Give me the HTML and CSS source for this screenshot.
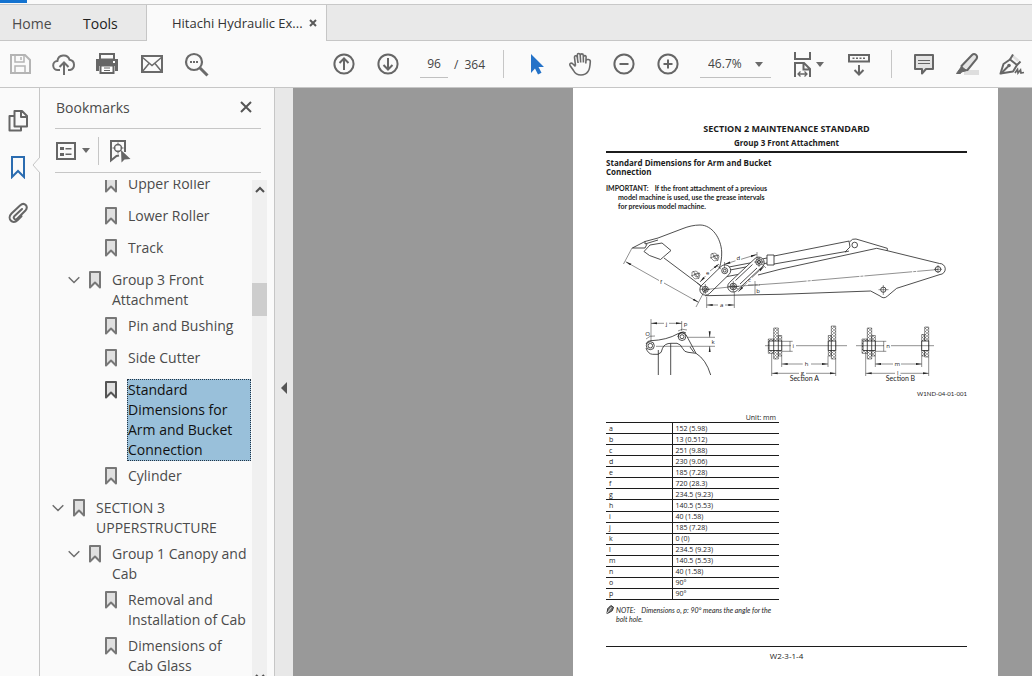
FILE: index.html
```html
<!DOCTYPE html>
<html lang="en">
<head>
<meta charset="utf-8">
<title>Hitachi Hydraulic Excavator</title>
<link rel="stylesheet" href="styles.css">
</head>
<body>
<svg class="defs" aria-hidden="true">
  <symbol id="mark" viewBox="0 0 12 18"><path d="M1 1h10v15.500L6 11.500 1 16.500z" fill="#e0e0e0" stroke="currentColor" stroke-width="2" stroke-linejoin="round"/></symbol>
  <symbol id="chev" viewBox="0 0 12 8"><path d="M.7 1.200 6 6.500l5.300-5.300" fill="none" stroke="#6e6e6e" stroke-width="1.500"/></symbol>
  <symbol id="caret" viewBox="0 0 8 5"><path d="M0 0h8L4 5z" fill="#6a6a6a"/></symbol>
</svg>
<div class="app">
  <div class="titlebar"><span class="titlebar-accent"></span></div>
  <nav class="tabs">
    <button class="tab home">Home</button>
    <button class="tab tools">Tools</button>
    <div class="tab active"><span>Hitachi Hydraulic Ex...</span>
      <button class="tab-close" aria-label="Close tab"><svg width="8" height="8" viewBox="0 0 8 8"><path d="M1 1l6 6M7 1 1 7" stroke="#5a5a5a" stroke-width="2"/></svg></button></div>
  </nav>
  <header class="toolbar">
    <div class="group">
      <button class="tool" aria-label="Save"><svg viewBox="0 0 28 28"><path d="M5 5h14l5 5v13H5z" fill="none" stroke="#b4b4b4" stroke-width="2"/><path d="M9 5v7h9V5M15 7v3M9 23v-7h10v7" fill="none" stroke="#b4b4b4" stroke-width="1.500"/></svg></button>
      <button class="tool" aria-label="Upload"><svg viewBox="0 0 28 28"><path d="M10 20H8a4.500 4.500 0 0 1-.6-9 6.300 6.300 0 0 1 12.200-1.200A5.200 5.200 0 0 1 20 20h-2M14 25V13M9.500 17l4.500-4.500 4.500 4.500" fill="none" stroke="#6e6e6e" stroke-width="2"/></svg></button>
      <button class="tool" aria-label="Print"><svg viewBox="0 0 28 28"><path d="M2 9h22v12h-3v-5H5v5H2zM5 3h16v6H5z" fill="#666"/><path d="M7 5h12v3.500H7z" fill="#fafafa"/><path d="M6.500 15.500h13V23h-13z" fill="#fff" stroke="#666" stroke-width="2"/><path d="M10 18h6M10 20.500h6" stroke="#666"/><path d="M19 11h2v2h-2z" fill="#fff"/></svg></button>
      <button class="tool" aria-label="Email"><svg viewBox="0 0 28 28"><path d="M4 6h20v16H4z" fill="none" stroke="#6a6a6a" stroke-width="2"/><path d="m4 7 10 8.500L24 7M4 22l7-8.500M24 22l-7-8.500" fill="none" stroke="#6a6a6a" stroke-width="1.500"/></svg></button>
      <button class="tool" aria-label="Find"><svg viewBox="0 0 28 28"><circle cx="12" cy="12" r="8" fill="none" stroke="#6a6a6a" stroke-width="2.200"/><path d="m18 18 7.500 7.500" stroke="#6a6a6a" stroke-width="3"/><path d="M8 11h2v2H8zM11 11h2v2h-2zM14 11h2v2h-2z" fill="#6a6a6a"/></svg></button>
    </div>
    <div class="spacer"></div>
    <div class="group">
      <button class="tool" aria-label="Previous page"><svg viewBox="0 0 28 28" fill="none" stroke="#666" stroke-width="2"><circle cx="14" cy="14" r="9.600"/><path d="M14 20V9M9.500 13 14 8.500l4.500 4.500"/></svg></button>
      <button class="tool" aria-label="Next page"><svg viewBox="0 0 28 28" fill="none" stroke="#666" stroke-width="2"><circle cx="14" cy="14" r="9.600"/><path d="M14 8v11M9.500 15l4.500 4.500 4.500-4.500"/></svg></button>
    </div>
    <div class="pager"><input type="text" value="96" aria-label="Page number"><span>/</span><span>364</span></div>
    <div class="divider"></div>
    <div class="group pointer">
      <button class="tool" aria-label="Select"><svg viewBox="0 0 28 28"><path d="M9 4v19l4-4.500 3 6 3.500-1.700-3-5.800H22z" fill="#2472c8"/></svg></button>
      <button class="tool" aria-label="Pan"><svg viewBox="0 0 28 28" fill="none" stroke="#6a6a6a" stroke-width="1.600" stroke-linejoin="round"><path d="M9.500 15.500 8.500 7.500c-.3-2 2.300-2.500 2.700-.5l.9 6M11.500 8.500 11.300 5c0-2 2.700-2 2.900 0l.5 7.500M14.300 5.500c0-2.200 3-2.200 3 0l.1 7M17.400 7c.2-2 2.900-1.800 2.700.2l-.3 6.300M20 10.500c.6-1.700 4.600-1.300 4.300 1.200-.3 5.500-.8 8-2.300 9.800-2 2.800-4.500 3.500-7 3.500-4.500 0-6.300-2-7.500-4.500L4 15.500c-.9-2 1-3 2.400-2l3.100 3"/></svg></button>
      <button class="tool" aria-label="Zoom out"><svg viewBox="0 0 28 28" fill="none" stroke="#666" stroke-width="2"><circle cx="14" cy="14" r="9.600"/><path d="M9.500 14h9"/></svg></button>
      <button class="tool" aria-label="Zoom in"><svg viewBox="0 0 28 28" fill="none" stroke="#666" stroke-width="2"><circle cx="14" cy="14" r="9.600"/><path d="M9.500 14h9M14 9.500v9"/></svg></button>
    </div>
    <div class="zoom"><select aria-label="Zoom level"><option>46.7%</option></select><svg class="zoom-caret" width="8" height="5"><use href="#caret"/></svg></div>
    <div class="group">
      <button class="tool fit" aria-label="Fit width"><svg viewBox="0 0 28 28" fill="none" stroke="#666" stroke-width="2"><path d="M6 2v7h15V2M6 27V13h9l6 6v8M14.500 13v6.500H21"/><path d="M9 24h9m-6.500-2.500L9 24l2.500 2.500m4-5L18 24l-2.500 2.500" stroke-width="1.300"/></svg><svg class="fit-caret" viewBox="0 0 8 5"><use href="#caret"/></svg></button>
      <button class="tool keys" aria-label="Toolbar options"><svg viewBox="0 0 28 28" fill="none" stroke="#666" stroke-width="2"><path d="M4 5h20v6.500H4zM14 15v9M9.500 20l4.500 4.500 4.500-4.500"/><path d="M7.500 8.300H21" stroke-dasharray="2 1.500" stroke-width="1.600"/></svg></button>
    </div>
    <div class="divider last"></div>
    <div class="group">
      <button class="tool" aria-label="Comment"><svg viewBox="0 0 28 28"><path d="M5 5h18v14h-7l-4 4.500V19H5z" fill="#e4e4e4" stroke="#666" stroke-width="2" stroke-linejoin="round"/><path d="M8 10.500h12M8 13.500h12" stroke="#666" stroke-width="1.200"/></svg></button>
      <button class="tool" aria-label="Highlight"><svg viewBox="0 0 28 28"><path d="M10 20h15v5H10z" fill="#dedede"/><path d="M7.500 16 18 5c2.500-2.500 6.500.5 4.500 4L13.500 20l-5 .5z" fill="#e4e4e4" stroke="#666" stroke-width="2"/><path d="m7.500 16.500 5 4L7.500 22l-1 1.500h-4z" fill="#666" stroke="#666"/></svg></button>
      <button class="tool" aria-label="Sign"><svg viewBox="0 0 28 28"><path d="m14.500 4 7 6-2 2-6-5.500z" fill="#e0e0e0"/><path d="M2.500 23.500 5.500 14 12 9.500l7 5.500-4 6.500z" fill="#fafafa" stroke="#666" stroke-width="2" stroke-linejoin="round"/><path d="m12 9.500 3-5M19 15l3.500-3.500M3 23.500l7-7" stroke="#666" stroke-width="2"/><circle cx="11" cy="15.500" r="1.800" fill="#666"/><path d="m17 23 2.500-3.500.5 3.500 2.500-3 .5 3 3-.5" fill="none" stroke="#666" stroke-width="1.700"/></svg></button>
    </div>
  </header>
  <main class="work">
    <nav class="rail">
      <button class="rail-btn" aria-label="Page thumbnails"><svg width="20" height="24" viewBox="0 0 20 24" fill="none" stroke="#666" stroke-width="2"><path d="M6.500 2h7.500l5 5v10.500H6.500zM13 2v6h6M6.500 7H1.500v14.500h11.500V18" stroke-linejoin="round"/></svg></button>
      <button class="rail-btn current" aria-label="Bookmarks"><svg width="16" height="24" viewBox="0 0 16 24"><path d="M2 2h12v20l-6-6-6 6z" fill="none" stroke="#2b6cb0" stroke-width="2"/></svg><svg class="notch" width="8" height="16" viewBox="0 0 8 16"><path d="M8 0 1 8l7 8" fill="#fafafa" stroke="#c6c6c6"/></svg></button>
      <button class="rail-btn" aria-label="Attachments"><svg width="20" height="24" viewBox="0 0 20 24" fill="none" stroke="#666" stroke-width="2"><path d="m14 8-7.500 7c-2 2 .7 4.800 2.700 2.800l8-8C21 5.500 16.500.5 12 4.500l-8.500 8c-5 5 1 11.500 6 6.800l4-4" stroke-linecap="round"/></svg></button>
    </nav>
    <aside class="panel">
      <div class="panel-head"><h2>Bookmarks</h2><button aria-label="Close panel"><svg width="12" height="12" viewBox="0 0 12 12"><path d="m1 1 10 10M11 1 1 11" stroke="#555" stroke-width="2"/></svg></button></div>
      <div class="panel-tools">
        <button class="options" aria-label="Options"><svg width="20" height="18" viewBox="0 0 20 18"><path d="M1 1h18v16H1z" fill="none" stroke="#666" stroke-width="2"/><path d="M4 5h4v3H4zM4 11h4v3H4zM9.500 6h6v1.500h-6zM9.500 11.500h6V13h-6z" fill="#666"/></svg><svg width="8" height="5"><use href="#caret"/></svg></button>
        <span class="panel-split"></span>
        <button aria-label="Find current bookmark"><svg width="22" height="24" viewBox="0 0 22 24"><path d="M10 16.500 7.500 17 2 21.500V2h14v11" fill="none" stroke="#666" stroke-width="2"/><circle cx="9" cy="9" r="3.500" fill="none" stroke="#666" stroke-width="1.400"/><path d="M9 3.500v3M9 11.500v3M3.500 9h3M11.500 9h3" stroke="#666"/><path d="m12 11 .5 12.500 3-3 6-.5z" fill="#666"/></svg></button>
      </div>
      <div class="tree-wrap">
        <ul class="tree">
          <li class="row l3"><svg class="mark"><use href="#mark"/></svg><a href="#">Upper Roller</a></li>
          <li class="row l3"><svg class="mark"><use href="#mark"/></svg><a href="#">Lower Roller</a></li>
          <li class="row l3"><svg class="mark"><use href="#mark"/></svg><a href="#">Track</a></li>
          <li class="row l2"><button aria-label="Collapse"><svg class="chev"><use href="#chev"/></svg></button><svg class="mark"><use href="#mark"/></svg><a href="#">Group 3 Front Attachment</a></li>
          <li class="row l3"><svg class="mark"><use href="#mark"/></svg><a href="#">Pin and Bushing</a></li>
          <li class="row l3"><svg class="mark"><use href="#mark"/></svg><a href="#">Side Cutter</a></li>
          <li class="row l3 selected"><svg class="mark"><use href="#mark"/></svg><a href="#">Standard Dimensions for Arm and Bucket Connection</a></li>
          <li class="row l3"><svg class="mark"><use href="#mark"/></svg><a href="#">Cylinder</a></li>
          <li class="row l1"><button aria-label="Collapse"><svg class="chev"><use href="#chev"/></svg></button><svg class="mark"><use href="#mark"/></svg><a href="#">SECTION 3 UPPERSTRUCTURE</a></li>
          <li class="row l2"><button aria-label="Collapse"><svg class="chev"><use href="#chev"/></svg></button><svg class="mark"><use href="#mark"/></svg><a href="#">Group 1 Canopy and Cab</a></li>
          <li class="row l3"><svg class="mark"><use href="#mark"/></svg><a href="#">Removal and Installation of Cab</a></li>
          <li class="row l3"><svg class="mark"><use href="#mark"/></svg><a href="#">Dimensions of Cab Glass</a></li>
        </ul>
        <div class="scrollbar"><svg width="10" height="7" viewBox="0 0 10 7"><path d="m1 6 4-4 4 4" fill="none" stroke="#505050" stroke-width="2"/></svg><span class="thumb"></span><svg class="down" width="10" height="7" viewBox="0 0 10 7"><path d="m1 1 4 4 4-4" fill="none" stroke="#505050" stroke-width="2"/></svg></div>
      </div>
    </aside>
    <button class="splitter" aria-label="Hide panel"><svg width="6" height="12" viewBox="0 0 6 12"><path d="M6 0v12L0 6z" fill="#555"/></svg></button>
    <section class="viewer">
      <article class="page">
        <h1>SECTION 2 MAINTENANCE STANDARD</h1>
        <p class="subtitle">Group 3 Front Attachment</p>
        <h3>Standard Dimensions for Arm and Bucket Connection</h3>
        <p class="important"><span>IMPORTANT:</span>If the front attachment of a previous model machine is used, use the grease intervals for previous model machine.</p>
        <svg class="figure" viewBox="606 215 361 172" role="img" aria-label="Arm and bucket dimension drawing">
          <defs>
            <pattern id="hatch" width="3" height="3" patternUnits="userSpaceOnUse"><path d="M0 3 3 0M0 0l3 3" stroke="#333" stroke-width=".4"/></pattern>
            <marker id="arr" viewBox="0 0 6 4" markerWidth="6" markerHeight="4" refX="6" refY="2" orient="auto" markerUnits="userSpaceOnUse"><path d="M0 1 6 2 0 3z" fill="#222"/></marker>
          </defs>
          <g class="ln">
            <path d="M716 282C718 270 722 264 721.700 252 721 238 712 225 700 225c-6 0-12 1.500-17 3.500L658 238l-13 3.500L632.300 248H645l2-4M645 241.500v2.500l13-4"/>
            <path d="m644 251.500 6-6.500 12-2 9 7.500-10.500 9-11-4zM664 258l36 27 1 3"/>
            <path d="M716 282l-10 1.500M705 295.700 780 294.300 870.700 291 880 296q4 3.500 7.500 0l9.200-7.700L940 274.500a5.500 5.500 0 0 0-.5-11L887.300 250.700 876.700 248.300 780 269.300 758 275M722 277.500l21-4"/>
            <path d="m774 256 75.300-15M774 264l71-12.300M849 241l1 6-5 5 4-1M850 241.500a6 6 0 0 1 6-2.500l31.300 9.300v2.400"/>
            <path d="M767 255h7v10h-7zM762 259l5-1M763 264l4-1M729 267l26-5M730 270l21-4"/>
            <path class="white" d="m701.500 285.500 19.500-19a5.500 5.500 0 0 1 8 8l-19.500 19a5.500 5.500 0 1 1-8-8z"/>
            <path class="white" d="m729.500 282.500 25.500-24a5.500 5.500 0 0 1 8 7.500l-25.500 24a5.500 5.500 0 1 1-8-7.500zM735.500 280.500l17-16M740 284l17-16"/>
            <path class="thin" d="m706 289.500 28-3 56-4L938 269.500" stroke-dasharray="48 1 3 1"/>
            <circle cx="705.300" cy="289.300" r="3"/><circle cx="705.300" cy="289.300" r="1.500"/>
            <circle cx="724.700" cy="270.700" r="3"/><circle cx="724.700" cy="270.700" r="1.400"/>
            <circle cx="733.300" cy="286.500" r="3.300"/><circle cx="733.300" cy="286.500" r="1.700"/>
            <circle cx="759" cy="262" r="3.300"/><circle cx="759" cy="262" r="1.700"/>
            <circle cx="854.700" cy="245" r="2.800"/><circle cx="938" cy="269.300" r="2.800"/><circle cx="883.300" cy="289.700" r="2.600"/>
            <path class="thin" d="M878.500 289.700h10M883.300 285v10M934 269.300h8M938 265v8M700 289.300h10M705.300 284v10M728 286.500h11M733.300 281v11M754 262h10M759 257v10"/>
            <path class="thin" d="m692 272 4-1 4 3-1 4-4 1-3-3zM693 271l6 8M691 276l9-3M694 274l4-1 1 3-3 1zM711 254l4-1 4 3-1 4-4 1-3-3zM712 253l6 8M710 258l9-3M713 256l4-1 1 3-3 1z"/>
            <path class="thin" d="m632 248-8.500 16M705 290l-9 17M706.700 297v11M734.300 292v16M755 281v13M724.500 262v6M757 252v8M697 283l6 4M716 265l5 4M738 289l-3-2M762 264l4 4M748 285h12"/>
            <path class="dim" d="M659 280.500l-33.300-18.800"/><path class="dim" d="m664 283 34.500 19.300"/>
            <path class="dim" d="M718 305h-11.300"/><path class="dim" d="M725 305h9.300"/>
            <path class="dim" d="m735.500 260.800-11 3.500"/><path class="dim" d="m741 259.300 15.700-4.800"/>
            <path class="dim" d="m705.500 276-5.500 6"/><path class="dim" d="m710 271 9-7"/>
            <path class="dim" d="m747 282.500-8.700 9.200"/><path class="dim" d="m752 277.500 12-11"/>
            <path class="thin" d="M651 319v22M681.700 321v10M688 337.300h27M656 346.300h59M646 339q4-4 9-3M678 331q4-3 9-1"/>
            <path class="dim" d="M664 323.300h-13"/><path class="dim" d="M669 323.300h12.700"/><path class="dim" d="M709.700 333v4.300"/><path class="dim" d="M709.700 350v-3.700"/>
            <circle cx="650.300" cy="345.700" r="4"/><circle cx="650.300" cy="345.700" r="2.300"/><circle cx="682" cy="336.700" r="3.800"/><circle cx="682" cy="336.700" r="2"/>
            <path d="M646 344a5 5 0 0 1 5-3.300q16-.7 27-7 5-3 8 1l10 18.600q10 6 14.700 21.700M646 348q2 6 6.500 6.300h5.500q4-1 4.500-6 2-5 8.500-5h6q4 1 5.500 5 2 4 5.500 4l8 1M658.300 350v25M670.700 343.500V375M678 337a5 5 0 0 1 8-4M690 347l4 5.500"/>
            <path class="hatched" d="M773.700 328h4.600v31h-4.600zM768.300 339h5.400v14.300h-5.400zM778.300 335.500h3.400V356h-3.400zM828.300 335.500h3V356h-3zM831.300 326h4.400v33h-4.400zM867.300 328h4.400v31h-4.400zM862 339h5.300v14.300H862zM871.700 335.500h3.600V356h-3.600zM921.700 334.500h3V356h-3zM924.700 327h4v30h-4z"/>
            <path class="white" d="M769 341h12.700v9.500H769zM828.300 341h7.400v9.500h-7.400zM863 341h12.300v9.500H863zM921.700 341h7v9.500h-7zM773.700 341v9.500M778.300 341v9.500M867.300 341v9.500M871.700 341v9.500M831.300 341v9.500"/>
            <path class="thin" d="M765 345.700h26M796 345.700h51M856 345.700h28M891 345.700h43M781.700 341.300h11M781.700 351.300h11M875.300 341.300h11M875.300 351.300h11M781.700 356v11M771.700 353v23M828 356v11M835.700 359v17M875.300 356v11M865.700 353v23M921.700 356v11M928.700 357v19M790 341.300v10M883.700 341.300v10"/>
            <path class="dim" d="M802.700 364h-21"/><path class="dim" d="M811 364h17"/><path class="dim" d="M799 373.300h-27.300"/><path class="dim" d="M806 373.300h29.700"/>
            <path class="dim" d="M893 364h-17.700"/><path class="dim" d="M901 364h20.700"/><path class="dim" d="M895 373.300h-29.300"/><path class="dim" d="M900.500 373.300h28.200"/>
          </g>
          <g class="lb">
            <text x="661" y="284">f</text><text x="721.700" y="307">a</text><text x="738.300" y="260">d</text><text x="707.700" y="275">e</text><text x="749.500" y="282">c</text><text x="758" y="293">b</text>
            <text x="666.500" y="326">j</text><text x="685.500" y="326">p</text><text x="647.700" y="336">O</text><text x="713" y="344">k</text>
            <text x="793.300" y="348">i</text><text x="888" y="348">n</text><text x="806.700" y="366">h</text><text x="802.300" y="375">g</text><text x="897.300" y="366">m</text><text x="897.700" y="375">l</text>
            <text class="cap" x="804.300" y="381">Section A</text><text class="cap" x="900.500" y="381">Section B</text>
          </g>
        </svg>
        <p class="code">W1ND-04-01-001</p>
        <table>
          <caption>Unit: mm</caption>
          <tbody>
            <tr><th>a</th><td>152 (5.98)</td></tr><tr><th>b</th><td>13 (0.512)</td></tr><tr><th>c</th><td>251 (9.88)</td></tr><tr><th>d</th><td>230 (9.06)</td></tr>
            <tr><th>e</th><td>185 (7.28)</td></tr><tr><th>f</th><td>720 (28.3)</td></tr><tr><th>g</th><td>234.5 (9.23)</td></tr><tr><th>h</th><td>140.5 (5.53)</td></tr>
            <tr><th>i</th><td>40 (1.58)</td></tr><tr><th>j</th><td>185 (7.28)</td></tr><tr><th>k</th><td>0 (0)</td></tr><tr><th>l</th><td>234.5 (9.23)</td></tr>
            <tr><th>m</th><td>140.5 (5.53)</td></tr><tr><th>n</th><td>40 (1.58)</td></tr><tr><th>o</th><td>90°</td></tr><tr><th>p</th><td>90°</td></tr>
          </tbody>
        </table>
        <div class="note"><svg width="9" height="11" viewBox="0 0 9 11"><path d="M1 10 2 4.500 5.500 1l3 2L7 7 3.500 9z" fill="#777" stroke="#222"/><path d="m1 10 5-7" stroke="#fff" stroke-width=".8"/></svg><p><span>NOTE:</span>Dimensions o, p: 90° means the angle for the bolt hole.</p></div>
        <footer>W2-3-1-4</footer>
      </article>
    </section>
  </main>
</div>
</body>
</html>
```
FILE: styles.css
```css
* { box-sizing: border-box; }
body { margin: 0; font-family: "Open Sans", "Noto Sans", sans-serif; font-size: 14px; color: #4b4b4b; background: #fafafa; }
button { padding: 0; border: 0; background: none; font: inherit; color: inherit; }
h1, h2, h3, p, ul { margin: 0; padding: 0; font-weight: normal; }
svg { display: block; }
.defs { position: absolute; width: 0; height: 0; }
.app { display: flex; flex-direction: column; height: 100vh; overflow: hidden; }

.titlebar { flex: none; height: 5px; border-bottom: 1px solid #c8c8c8; }
.titlebar-accent { display: block; width: 27px; height: 3px; background: #1473d0; }

.tabs { flex: none; display: flex; height: 36px; background: #e9e9e9; box-shadow: inset 0 -1px #c6c6c6; }
.tab { display: flex; align-items: center; }
.home { padding-left: 12px; width: 72px; }
.tools { padding-left: 11px; width: 74px; color: #222; }
.active { justify-content: space-between; width: 181px; padding: 0 9px 0 25px; background: #fafafa; border: solid #c6c6c6; border-width: 0 1px; font-size: 13px; color: #333; white-space: nowrap; }

.toolbar { flex: none; display: flex; align-items: center; height: 47px; padding: 0 6px; border-bottom: 1px solid #c6c6c6; }
.group { display: flex; gap: 16px; }
.tool { position: relative; width: 28px; height: 28px; }
.spacer { flex: 1; }
.pager { display: flex; align-items: center; gap: 6px; margin-left: 18px; width: 83px; font-size: 12px; color: #444; }
.pager input { width: 28px; height: 28px; padding: 0; border: 0; border-bottom: 1px solid #c0c0c0; background: none; font: inherit; color: inherit; text-align: center; }
.divider { width: 1px; height: 28px; margin-right: 18px; background: #c6c6c6; }
.last { margin: 0 18px; }
.zoom { position: relative; width: 71px; margin: 0 18px; }
.zoom select { appearance: none; width: 100%; height: 28px; padding: 0 0 0 8px; border: 0; border-bottom: 1px solid #c0c0c0; background: none; font: inherit; font-size: 12px; color: #444; }
.zoom-caret { position: absolute; right: 8px; top: 12px; }
.fit { margin-right: 12px; }
.fit-caret { position: absolute; left: 27px; top: 12px; width: 8px; height: 5px; }

.work { flex: 1; display: flex; min-height: 0; }
.rail { flex: none; display: flex; flex-direction: column; align-items: center; gap: 22px; width: 40px; padding: 21px 3px 0 0; border-right: 1px solid #c6c6c6; }
.rail-btn { position: relative; display: flex; justify-content: center; width: 36px; height: 24px; }
.notch { position: absolute; left: 32px; top: 2px; }

.panel { flex: none; display: flex; flex-direction: column; width: 235px; border-right: 1px solid #c6c6c6; }
.panel-head { display: flex; align-items: center; justify-content: space-between; height: 41px; margin: 0 13px 0 15px; padding: 0 9px 2px 1px; border-bottom: 1px solid #c6c6c6; }
.panel-head h2 { font-size: 14px; }
.panel-tools { display: flex; align-items: center; height: 44px; margin: 0 13px 0 15px; padding-left: 1px; border-bottom: 1px solid #c6c6c6; }
.options { display: flex; align-items: center; gap: 6px; }
.panel-split { width: 1px; height: 28px; margin: 0 10px 0 8px; background: #c6c6c6; }
.tree-wrap { flex: 1; display: flex; min-height: 0; margin-top: 7px; overflow: hidden; }
.tree { flex: 1; margin-top: -9px; list-style: none; }
.row { display: flex; align-items: flex-start; min-height: 32px; padding: 2px 0; line-height: 20px; }
.row a { flex: 1; padding-right: 2px; border: 1px solid transparent; color: inherit; text-decoration: none; }
.l1 { padding-left: 12px; }
.l2 { padding-left: 28px; }
.l3 { padding-left: 65px; }
.row button { margin: 7px 9px 0 0; }
.chev { width: 12px; height: 8px; }
.mark { flex: none; width: 12px; height: 18px; margin: 2px 10px 0 0; color: #777; }
.selected .mark { color: #555; }
.row.selected a { margin-right: 1px; background: #99c0da; border: 1px dotted #234; color: #111; }
.scrollbar { flex: none; display: flex; flex-direction: column; align-items: center; width: 15px; margin-right: 7px; padding-top: 6px; background: #f0f0f0; }
.thumb { width: 100%; height: 33px; margin-top: 90px; background: #cdcdcd; }
.down { margin-top: auto; margin-bottom: -5px; flex: none; }
.splitter { flex: none; display: flex; align-items: center; width: 18px; padding: 12px 0 0 6px; background: #e8e8e8; }

.viewer { flex: 1; display: flex; justify-content: flex-end; padding-right: 34px; background: #999; overflow: hidden; }
.page { flex: none; width: 425px; padding: 34px 31px 0 33px; background: #fff; color: #1c1c1c; font-family: "Open Sans", sans-serif; font-size: 7px; line-height: 9px; }
.page h1 { font-size: 9px; line-height: 14px; font-weight: 700; text-align: center; }
.subtitle { padding-bottom: 1px; border-bottom: 2px solid #1c1c1c; font-size: 8px; line-height: 14px; font-weight: 700; text-align: center; }
.page h3 { width: 173px; margin-top: 5px; font-size: 8px; font-weight: 700; }
.important { width: 168px; margin-top: 8px; padding-left: 12px; text-indent: -12px; font-family: Lato, sans-serif; font-weight: 700; }
.important span, .note span { margin-right: 6px; }
.figure { width: 100%; margin-top: 4px; }
.ln { fill: none; stroke: #222; stroke-width: .8; }
.thin { stroke-width: .5; }
.white { fill: #fff; }
.hatched { fill: url(#hatch); stroke-width: .5; }
.dim { stroke-width: .5; marker-end: url(#arr); }
.lb { fill: #222; font-size: 6px; text-anchor: middle; }
.lb .cap { font-size: 7px; font-family: Lato, sans-serif; }
.code { margin-top: 2px; font-family: Lato, sans-serif; font-size: 6px; text-align: right; }
table { width: 173px; height: 178px; margin-top: 15px; border-collapse: collapse; }
caption { padding-right: 3px; text-align: right; }
th, td { padding: 0 3px; border: solid #1c1c1c; border-width: 1px 0; font-weight: normal; text-align: left; }
th { width: 66px; border-right-width: 1px; }
.note { display: flex; gap: 2px; width: 173px; margin-top: 4px; font-family: Lato, sans-serif; font-style: italic; }
.note p { padding-top: 2px; }
footer { margin-top: 22px; padding-top: 4px; border-top: 1px solid #1c1c1c; font-size: 8px; text-align: center; }
```
